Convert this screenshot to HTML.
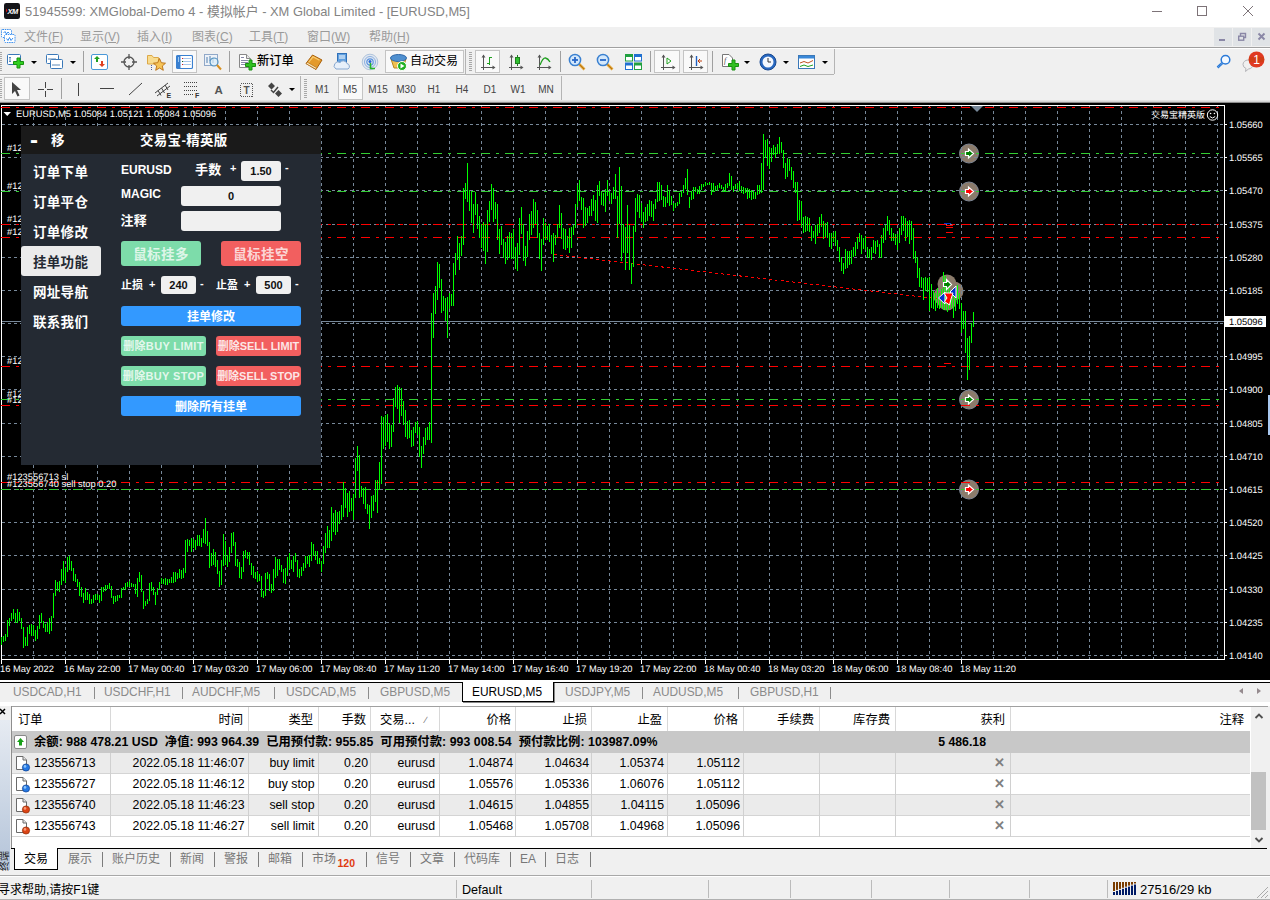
<!DOCTYPE html>
<html lang="zh"><head><meta charset="utf-8"><title>MT4</title><style>
*{box-sizing:border-box;margin:0;padding:0}
html,body{width:1270px;height:900px;overflow:hidden;background:#f0f0f0}
body{position:relative;font-family:"Liberation Sans","Noto Sans CJK SC",sans-serif;font-size:12px;color:#000}
.abs{position:absolute}
#title{left:0;top:0;width:1270px;height:27px;background:#fff}
#title .t{left:25px;top:3px;font-size:12.9px;line-height:18px;color:#838383;white-space:nowrap}
#menu{left:0;top:27px;width:1270px;height:20px;background:#f0f0f0}
#menu span{position:absolute;top:2px;line-height:16px;color:#9a9a9a;font-size:12px;white-space:nowrap}
.tb{left:0;width:1270px;height:27px;background:#f0f0f0}
.sep{position:absolute;width:1px;background:#a0a0a0}
.grip{position:absolute;width:3px;background-image:repeating-linear-gradient(#a8a8a8 0 1px,transparent 1px 2px)}
.pressed{position:absolute;border:1px solid #c4c4c4;background:#f9f9f9}
.ic{position:absolute}
.dd{position:absolute;width:0;height:0;border-left:3px solid transparent;border-right:3px solid transparent;border-top:3px solid #000}
.tf{position:absolute;top:84px;font-size:10px;color:#444;transform:translateX(-50%);white-space:nowrap}
#panel{left:21px;top:126px;width:300px;height:339px;background:#242a33;color:#fff;font-weight:bold;font-size:13.5px;letter-spacing:.3px}
#panel .hd{left:0;top:0;width:300px;height:28px;background:#1a1a1a}
#panel .m{position:absolute;left:12px;white-space:nowrap;line-height:16px}
#panel .sel{left:0;top:120px;width:80px;height:30px;background:#ebebeb;border-radius:3px}
#panel .in{position:absolute;background:#f0f0f0;border-radius:3px;color:#111;font-size:11px;letter-spacing:0;text-align:center;line-height:20px}
#panel .b{position:absolute;border-radius:3px;text-align:center;white-space:nowrap;overflow:hidden;letter-spacing:0}
#panel .l{position:absolute;white-space:nowrap;line-height:16px}
.g{background:#7ddcaa}.r{background:#f25f5f}.bl{background:#3399ff}
#ctabs{left:0;top:680px;width:1270px;height:26px;background:#f0f0f0;border-top:2px solid #fff}
#ctabs span{position:absolute;top:2px;line-height:16px;font-size:11.9px;color:#8a8a8a;white-space:nowrap}
#ctabs i{position:absolute;top:5px;width:1px;height:12px;background:#8c8c8c}
#term{left:0;top:706px;width:1270px;height:172px;background:#f0f0f0}
#tbl{left:11px;top:0;width:1240px;height:142px;background:#fff;border-top:1px solid #a0a0a0}
.row{position:absolute;left:0;width:1239px;height:21px;border-bottom:1px solid #d4d4d4}
.row span{position:absolute;top:2px;line-height:16px;white-space:nowrap;font-size:12.3px}
.hdr span{color:#000}
.vs{position:absolute;top:0;width:1px;background:#d8d8d8}
#status{left:0;top:875px;width:1270px;height:25px;background:#f0f0f0;border-top:1px solid #a8a8a8;border-bottom:1px solid #b0b0b0;box-shadow:inset 0 1px 0 #fff}
#status span{position:absolute;top:5.5px;line-height:16px;font-size:12px;white-space:nowrap}
#status i{position:absolute;top:4px;width:1px;height:18px;background:#bbb}
#ttabs span{position:absolute;top:3px;line-height:16px;font-size:12px;color:#777;white-space:nowrap}
#ttabs i{position:absolute;top:4px;width:1px;height:15px;background:#7c7c7c}
</style></head><body><div id="title" class="abs"><svg class="abs" style="left:4px;top:3px" width="16" height="16" viewBox="0 0 16 16"><rect x="0" y="0" width="16" height="16" rx="2.200" fill="#141418"/><text x="8.600" y="11" font-family="'Liberation Sans',sans-serif" font-size="7.500" font-weight="bold" font-style="italic" fill="#fff" text-anchor="middle" letter-spacing="-0.5">XM</text><path d="M2 5.500L3.500 7.500L2 9.500Z" fill="#e01010"/></svg><div class="abs t">51945599: XMGlobal-Demo 4 - 模拟帐户 - XM Global Limited - [EURUSD,M5]</div><svg class="abs" style="left:1140px;top:0" width="130" height="24" viewBox="0 0 130 24" fill="none" stroke="#7d7378" stroke-width="1" shape-rendering="crispEdges"><path d="M12 11.5H22"/><rect x="57.5" y="6.5" width="9" height="9"/><path d="M103 6L113 16M113 6L103 16" shape-rendering="auto"/></svg></div><div id="menu" class="abs"><svg class="ic" style="left:1px;top:2px" width="16" height="15" viewBox="0 0 16 15" ><rect x="0.500" y="0.500" width="10" height="8" rx="1" fill="#fff" stroke="#3a8ff0" stroke-dasharray="1.500 0.800"/><path d="M2.500 4L4 2.500L5.500 5L7 3L8.500 4.500" fill="none" stroke="#3a8ff0"/><rect x="3.500" y="5.500" width="10.500" height="8" rx="1" fill="#fff" stroke="#3a8ff0" stroke-dasharray="1.500 0.800"/><path d="M5.500 9.500L7 11.500L8.500 8.500L10 11.500L12 9" fill="none" stroke="#3a8ff0"/></svg><span style="left:24px">文件(<u>F</u>)</span><span style="left:80px">显示(<u>V</u>)</span><span style="left:137px">插入(<u>I</u>)</span><span style="left:192px">图表(<u>C</u>)</span><span style="left:249px">工具(<u>T</u>)</span><span style="left:307px">窗口(<u>W</u>)</span><span style="left:369px">帮助(<u>H</u>)</span><div class="abs" style="left:1214px;top:1px;width:18px;height:18px;background:#e0e3e6"></div><div class="abs" style="left:1233px;top:1px;width:18px;height:18px;background:#e0e3e6"></div><div class="abs" style="left:1252px;top:1px;width:18px;height:18px;background:#e0e3e6"></div><svg class="abs" style="left:1214px;top:1px" width="56" height="18" viewBox="0 0 56 18" stroke="#8a87a6" fill="none"><path d="M5 12H11" stroke-width="2"/><path d="M26.500 8V5.500H31.500V9.500H30" stroke-width="1.400"/><rect x="24.700" y="8.200" width="5" height="4" stroke-width="1.400"/><path d="M44.500 5.500L50.500 11.500M50.500 5.500L44.500 11.500" stroke-width="1.900"/></svg></div><div class="abs tb" style="top:47px;height:28px;border-top:1px solid #a0a0a0;box-shadow:inset 0 1px 0 #fff"></div><div class="abs tb" style="top:75px"></div><div class="abs" style="left:0;top:74px;width:466px;height:1px;background:#b4b4b4"></div><div class="abs" style="left:0;top:75px;width:466px;height:1px;background:#fafafa"></div><div class="grip" style="left:-1px;top:52px;height:20px"></div><div class="grip" style="left:-1px;top:79px;height:20px"></div><div class="grip" style="left:469px;top:52px;height:20px"></div><div class="grip" style="left:304px;top:79px;height:20px"></div><div class="sep" style="left:83px;top:51px;height:21px"></div><div class="sep" style="left:229px;top:51px;height:21px"></div><div class="sep" style="left:560px;top:51px;height:21px"></div><div class="sep" style="left:650px;top:51px;height:21px"></div><div class="sep" style="left:712px;top:51px;height:21px"></div><div class="sep" style="left:465px;top:49px;height:25px;background:#b4b4b4"></div><div class="sep" style="left:834px;top:49px;height:25px;background:#b4b4b4"></div><div class="sep" style="left:466px;top:74px;width:368px;height:1px;background:#b4b4b4"></div><div class="sep" style="left:61px;top:78px;height:21px"></div><div class="sep" style="left:300px;top:76px;height:26px;background:#b4b4b4"></div><div class="sep" style="left:561px;top:76px;height:26px;background:#b4b4b4"></div><div class="pressed" style="left:172px;top:50px;width:25px;height:23px"></div><div class="pressed" style="left:385px;top:50px;width:79px;height:23px"></div><div class="pressed" style="left:475px;top:50px;width:25px;height:23px"></div><div class="pressed" style="left:654px;top:50px;width:26px;height:23px"></div><div class="pressed" style="left:683px;top:50px;width:25px;height:23px"></div><div class="pressed" style="left:4px;top:77px;width:26px;height:23px"></div><div class="pressed" style="left:338px;top:77px;width:25px;height:23px"></div><div class="dd" style="left:31px;top:61px"></div><div class="dd" style="left:70px;top:61px"></div><div class="dd" style="left:744px;top:61px"></div><div class="dd" style="left:783px;top:61px"></div><div class="dd" style="left:822px;top:61px"></div><div class="dd" style="left:289px;top:88px"></div><svg class="ic" style="left:7px;top:53px" width="18" height="18" viewBox="0 0 18 18" ><rect x="0.5" y="1.5" width="13" height="10" rx="1" fill="#fff" stroke="#3a78b8"/><path d="M3 4V9M2 5L3 4L4 5M2 8L3 9L4 8" stroke="#5a88b8" fill="none"/><path d="M10 5H13V8.500H16.500V11.500H13V15H10V11.500H6.500V8.500H10Z" fill="#30d020" stroke="#189010"/></svg><svg class="ic" style="left:46px;top:53px" width="18" height="18" viewBox="0 0 18 18" ><rect x="0.5" y="1.5" width="12" height="9" rx="1" fill="#fff" stroke="#3a78b8"/><rect x="4.5" y="6.5" width="12" height="9" rx="1" fill="#fff" stroke="#3a78b8"/><path d="M2 6H10M6 12H14" stroke="#5a88b8"/></svg><svg class="ic" style="left:91px;top:53px" width="18" height="18" viewBox="0 0 18 18" ><rect x="0.5" y="1.5" width="16" height="15" rx="1.5" fill="#fff" stroke="#4a98d8"/><path d="M6 3L9 6H7V9H5V6H3Z" fill="#20a020"/><path d="M11 14L8 11H10V8H12V11H14Z" fill="#e04020"/></svg><svg class="ic" style="left:121px;top:54px" width="16" height="16" viewBox="0 0 16 16" ><circle cx="8" cy="8" r="5" fill="none" stroke="#555" stroke-width="1.3"/><path d="M8 0V5M8 11V16M0 8H5M11 8H16" stroke="#555" stroke-width="1.3"/></svg><svg class="ic" style="left:146px;top:53px" width="20" height="18" viewBox="0 0 20 18" ><path d="M1.500 2.500H6L7.500 4.500H12.500V11H1.500Z" fill="#f8dc90" stroke="#dca848"/><path d="M5.500 12V17" stroke="#5060a0" stroke-dasharray="1 1" shape-rendering="crispEdges"/><path d="M13.500 5.500L15.300 9.700L19.500 10.200L16.300 13L17.300 17.300L13.500 15L9.700 17.300L10.700 13L7.500 10.200L11.700 9.700Z" fill="#f6c458" stroke="#b86c10" stroke-width="0.9"/></svg><svg class="ic" style="left:176px;top:54px" width="17" height="16" viewBox="0 0 17 16" ><rect x="0.500" y="1.500" width="16" height="13" rx="1.200" fill="#fff" stroke="#3a80d0" stroke-width="1.200"/><rect x="1" y="2" width="3.500" height="12" fill="#3a80d0"/><rect x="2" y="3" width="1" height="5" fill="#9cc8f4"/><path d="M7 4.500H15M7 7.500H15M7 10.500H15" stroke="#a8c8ec" shape-rendering="crispEdges"/><path d="M5.500 4.500H6.500M5.500 10.500H6.500" stroke="#e02020" shape-rendering="crispEdges"/><path d="M5.500 7.500H6.500" stroke="#106010" shape-rendering="crispEdges"/></svg><svg class="ic" style="left:204px;top:53px" width="18" height="18" viewBox="0 0 18 18" ><rect x="0.5" y="1.5" width="13" height="11" fill="#eef2f8" stroke="#90a8c8"/><path d="M3 4V10M6 3V8M9 5V10" stroke="#5080b0"/><circle cx="10" cy="9" r="4" fill="#d8ecf8" fill-opacity=".7" stroke="#5090c0" stroke-width="1.2"/><path d="M13 12L17 16.5" stroke="#d89020" stroke-width="2"/></svg><svg class="ic" style="left:238px;top:53px" width="18" height="18" viewBox="0 0 18 18" ><path d="M1.500 1.500H8.500L12.500 5.500V14.500H1.500Z" fill="#fff" stroke="#888"/><path d="M8.500 1.500V5.500H12.500" fill="#e8e8e8" stroke="#888"/><path d="M3 4.500H6M3 7.500H10M3 9.500H10M3 11.500H7" stroke="#8888a8" shape-rendering="crispEdges"/><path d="M11 7H14V10.5H17.5V13.5H14V17H11V13.5H7.5V10.5H11Z" fill="#30c020" stroke="#189010"/></svg><svg class="ic" style="left:305px;top:54px" width="18" height="16" viewBox="0 0 18 16" ><path d="M1 9.500L7.500 1L17 6L11 15.500Z" fill="#e49a2c" stroke="#a8600c"/><path d="M3.500 8.500L8 2.800L14.500 6.200" fill="none" stroke="#f8cc70" stroke-width="1.200"/><path d="M1.200 9.700L11 15.300L11.800 13.800L2.500 8.300Z" fill="#fce8b8" stroke="#a8600c" stroke-width="0.600"/></svg><svg class="ic" style="left:333px;top:53px" width="18" height="18" viewBox="0 0 18 18" ><rect x="4.5" y="0.5" width="9" height="11" fill="#60a0e0" stroke="#3070b8"/><path d="M6 3H12M6 5H12" stroke="#fff"/><path d="M3 16H15A3 3 0 0 0 14 10.5A4 4 0 0 0 7 9.5A3.5 3.5 0 0 0 3 16Z" fill="#e8f0fa" stroke="#88a8d0"/></svg><svg class="ic" style="left:361px;top:53px" width="18" height="18" viewBox="0 0 18 18" ><circle cx="9" cy="9" r="7.800" fill="#e2e8f0" stroke="#b0c4dc"/><circle cx="9" cy="9" r="5.500" fill="none" stroke="#8cb0e0"/><circle cx="9" cy="9" r="3.200" fill="none" stroke="#5c94e0" stroke-width="1.200"/><circle cx="9" cy="8.500" r="1.500" fill="#2868d0"/><path d="M9.500 10V15.500H14" fill="none" stroke="#28b428" stroke-width="1.600"/></svg><svg class="ic" style="left:389px;top:53px" width="19" height="18" viewBox="0 0 19 18" ><path d="M2 6L5 15H14L17 6Z" fill="#f0c050" stroke="#b88820"/><ellipse cx="9.5" cy="5" rx="8" ry="3.5" fill="#5090d0" stroke="#3068a8"/><circle cx="13" cy="13" r="4.5" fill="#20b020" stroke="#fff"/><path d="M11.5 10.5L15.5 13L11.5 15.5Z" fill="#fff"/></svg><svg class="ic" style="left:479px;top:53px" width="18" height="18" viewBox="0 0 18 18" ><path d="M4.500 2V16.500M2 14.500H15" stroke="#555" fill="none" shape-rendering="crispEdges"/><path d="M2.500 4.500L4.500 1.500L6.500 4.500Z M13.500 12.500L16.500 14.500L13.500 16.500Z" fill="#555"/><path d="M10.500 4V12M8 10.500H10.500M10.500 4.500H13" stroke="#20a020" stroke-width="1.500" fill="none" shape-rendering="crispEdges"/></svg><svg class="ic" style="left:507px;top:53px" width="18" height="18" viewBox="0 0 18 18" ><path d="M4.500 2V16.500M2 14.500H15" stroke="#555" fill="none" shape-rendering="crispEdges"/><path d="M2.500 4.500L4.500 1.500L6.500 4.500Z M13.500 12.500L16.500 14.500L13.500 16.500Z" fill="#555"/><path d="M10.5 2V13" stroke="#208020"/><rect x="8.5" y="4.500" width="4" height="6" fill="#30c030" stroke="#208020"/></svg><svg class="ic" style="left:535px;top:53px" width="18" height="18" viewBox="0 0 18 18" ><path d="M4.500 2V16.500M2 14.500H15" stroke="#555" fill="none" shape-rendering="crispEdges"/><path d="M2.500 4.500L4.500 1.500L6.500 4.500Z M13.500 12.500L16.500 14.500L13.500 16.500Z" fill="#555"/><path d="M5 12Q8 4.500 10.500 5T15 9" stroke="#20a020" stroke-width="1.300" fill="none"/></svg><svg class="ic" style="left:568px;top:53px" width="18" height="18" viewBox="0 0 18 18" ><path d="M11 11L16.500 16.500" stroke="#e0a030" stroke-width="2.6"/><path d="M11.500 11.500L16 16" stroke="#a86810" stroke-width="0.8"/><circle cx="7" cy="7" r="5.600" fill="#d4e8fb" stroke="#3a80d0" stroke-width="1.500"/><path d="M4 7H10" stroke="#2868c8" stroke-width="1.8"/><path d="M7 4V10" stroke="#2868c8" stroke-width="1.8"/></svg><svg class="ic" style="left:596px;top:53px" width="18" height="18" viewBox="0 0 18 18" ><path d="M11 11L16.500 16.500" stroke="#e0a030" stroke-width="2.6"/><path d="M11.500 11.500L16 16" stroke="#a86810" stroke-width="0.8"/><circle cx="7" cy="7" r="5.600" fill="#d4e8fb" stroke="#3a80d0" stroke-width="1.500"/><path d="M4 7H10" stroke="#2868c8" stroke-width="1.8"/></svg><svg class="ic" style="left:625px;top:54px" width="17" height="16" viewBox="0 0 17 16" ><rect x="0" y="0" width="8" height="7.500" fill="#20a040"/><rect x="9" y="0" width="8" height="7.500" fill="#2070d0"/><rect x="0" y="8.5" width="8" height="7.500" fill="#2070d0"/><rect x="9" y="8.5" width="8" height="7.500" fill="#20a040"/><rect x="1" y="3" width="6" height="3.500" fill="#fff"/><rect x="10" y="3" width="6" height="3.500" fill="#fff"/><rect x="1" y="11.5" width="6" height="3.500" fill="#fff"/><rect x="10" y="11.5" width="6" height="3.500" fill="#fff"/></svg><svg class="ic" style="left:659px;top:53px" width="18" height="18" viewBox="0 0 18 18" ><path d="M4.500 2V16.500M2 14.500H15" stroke="#555" fill="none" shape-rendering="crispEdges"/><path d="M2.500 4.500L4.500 1.500L6.500 4.500Z M13.500 12.500L16.500 14.500L13.500 16.500Z" fill="#555"/><path d="M8 5L12 8L8 11Z" fill="#fff" stroke="#20a020"/></svg><svg class="ic" style="left:687px;top:53px" width="18" height="18" viewBox="0 0 18 18" ><path d="M4.500 2V16.500M2 14.500H15" stroke="#555" fill="none" shape-rendering="crispEdges"/><path d="M2.500 4.500L4.500 1.500L6.500 4.500Z M13.500 12.500L16.500 14.500L13.500 16.500Z" fill="#555"/><path d="M9.5 3V13" stroke="#2060c0" stroke-width="1.4"/><path d="M15 8H11M13 6L11 8L13 10" stroke="#c04010" fill="none"/></svg><svg class="ic" style="left:721px;top:53px" width="18" height="18" viewBox="0 0 18 18" ><path d="M1.5 1.5H8L11.5 5V13.5H1.5Z" fill="#fff" stroke="#777"/><text x="3" y="10" font-size="8" font-style="italic" fill="#555" font-family="Liberation Serif,serif">f</text><path d="M11 7H14V10.5H17.5V13.5H14V17H11V13.5H7.5V10.5H11Z" fill="#30c020" stroke="#189010"/></svg><svg class="ic" style="left:759px;top:53px" width="18" height="18" viewBox="0 0 18 18" ><circle cx="9" cy="9" r="8" fill="#2868c0" stroke="#184890"/><circle cx="9" cy="9" r="5.5" fill="#f4f8ff"/><path d="M9 5V9H12" stroke="#333" fill="none"/></svg><svg class="ic" style="left:798px;top:55px" width="18" height="15" viewBox="0 0 18 15" ><rect x="0.5" y="0.5" width="16" height="13" fill="#fff" stroke="#3a78b8"/><rect x="1" y="1" width="15" height="2.500" fill="#3a88d8"/><path d="M2 8L6 6.500L10 8L15 5.500" stroke="#c05020" fill="none"/><path d="M2 11.500L6 10L10 11.500L15 10" stroke="#20a020" fill="none"/></svg><svg class="ic" style="left:1215px;top:53px" width="18" height="18" viewBox="0 0 18 18" ><circle cx="10.500" cy="6.700" r="4.300" fill="#f4f9ff" stroke="#2a7ad8" stroke-width="1.500"/><path d="M7.300 10L2.500 14.500" stroke="#2a7ad8" stroke-width="2.400"/><path d="M7 10.300L3 14" stroke="#9cc4f0" stroke-width="0.700" stroke-dasharray="1 1"/></svg><svg class="ic" style="left:1240px;top:50px" width="28" height="24" viewBox="0 0 28 24" ><path d="M3 14.500A5 4.500 0 1 1 8.500 19L5.500 21.500L6 18.500A5 4.500 0 0 1 3 14.500Z" fill="#f0f0f0" stroke="#b4b4b8"/><circle cx="16.500" cy="9.500" r="8" fill="#e03a22"/><rect x="9" y="7" width="15" height="5" fill="#c84010" opacity=".6"/><text x="16.500" y="14" font-size="12" fill="#fff" text-anchor="middle" font-family="Liberation Sans,sans-serif">1</text></svg><svg class="ic" style="left:11px;top:81px" width="12" height="17" viewBox="0 0 12 17" ><path d="M1 1V13L4 10L6.500 15.500L8.500 14.500L6 9H10Z" fill="#444"/></svg><svg class="ic" style="left:38px;top:82px" width="15" height="15" viewBox="0 0 15 15" shape-rendering="crispEdges"><path d="M7.500 0V6M7.500 9V15M0 7.500H6M9 7.500H15" stroke="#444" fill="none" stroke-width="1"/></svg><svg class="ic" style="left:78px;top:83px" width="2" height="13" viewBox="0 0 2 13" shape-rendering="crispEdges"><path d="M0.500 0V13" stroke="#444" fill="none" stroke-width="1"/></svg><svg class="ic" style="left:100px;top:88px" width="14" height="2" viewBox="0 0 14 2" shape-rendering="crispEdges"><path d="M0 0.500H14" stroke="#444" fill="none" stroke-width="1"/></svg><svg class="ic" style="left:128px;top:82px" width="15" height="14" viewBox="0 0 15 14" ><path d="M1 13L14 1" stroke="#444" fill="none" stroke-width="1" /></svg><svg class="ic" style="left:154px;top:81px" width="19" height="17" viewBox="0 0 19 17" ><path d="M1 12L14 2M3 15L16 5M4 9.500L7 14.500M7.500 7L10.500 12M11 4L14 9" stroke="#444" fill="none"/><text x="12.500" y="17" font-size="7" font-weight="bold" fill="#333" font-family="Liberation Sans,sans-serif">E</text></svg><svg class="ic" style="left:183px;top:82px" width="17" height="16" viewBox="0 0 17 16" ><path d="M1 0.500H14M1 4.500H14M1 8.500H14M1 12.500H11" stroke="#444" stroke-dasharray="1 1" shape-rendering="crispEdges"/><text x="12" y="16" font-size="7" font-weight="bold" fill="#333" font-family="Liberation Sans,sans-serif">F</text></svg><div class="abs" style="left:214.500px;top:82px;font-size:11.500px;line-height:16px;font-weight:bold;color:#555">A</div><svg class="ic" style="left:239px;top:82px" width="15" height="15" viewBox="0 0 15 15" ><rect x="1.500" y="1.500" width="12" height="13" fill="none" stroke="#555" stroke-dasharray="1 1" shape-rendering="crispEdges"/><text x="7.500" y="12" font-size="10" font-weight="bold" fill="#555" text-anchor="middle" font-family="Liberation Sans,sans-serif">T</text></svg><svg class="ic" style="left:267px;top:82px" width="16" height="15" viewBox="0 0 16 15" ><path d="M4.500 0.500L8 4L4.500 7.500L1 4Z M11.500 8L15 11.500L11.500 15L8 11.500Z" fill="#444"/><path d="M4 8L6.500 10.500L11 5" fill="none" stroke="#444" stroke-width="1.500"/></svg><div class="abs" style="left:257px;top:53px;font-size:12.3px;font-weight:500;line-height:16px;white-space:nowrap">新订单</div><div class="abs" style="left:410px;top:53px;font-size:12px;line-height:16px;white-space:nowrap">自动交易</div><div class="tf" style="left:322px">M1</div><div class="tf" style="left:350px">M5</div><div class="tf" style="left:378px">M15</div><div class="tf" style="left:406px">M30</div><div class="tf" style="left:434px">H1</div><div class="tf" style="left:462px">H4</div><div class="tf" style="left:490px">D1</div><div class="tf" style="left:518px">W1</div><div class="tf" style="left:546px">MN</div><div class="abs" style="left:0;top:100px;width:1270px;height:3px;background:linear-gradient(#f0f0f0,#d4d4d4 34%,#d4d4d4 66%,#8c8c8c 67%)"></div><svg id="chart" width="1270" height="578" viewBox="0 103 1270 578" shape-rendering="crispEdges" style="position:absolute;left:0;top:103px">
<rect x="0" y="103" width="1270" height="578" fill="#000"/>
<g shape-rendering="auto"><circle cx="969" cy="153.5" r="9.5" fill="#8b7b6b" stroke="#7d8593" stroke-width="1"/><circle cx="969" cy="191.5" r="9.5" fill="#8b7b6b" stroke="#7d8593" stroke-width="1"/><circle cx="969" cy="399.5" r="9.5" fill="#8b7b6b" stroke="#7d8593" stroke-width="1"/><circle cx="969" cy="489.5" r="9.5" fill="#8b7b6b" stroke="#7d8593" stroke-width="1"/><circle cx="947" cy="284" r="9.5" fill="#8b7b6b"/><circle cx="954" cy="291" r="9.5" fill="#8b7b6b"/><circle cx="947" cy="301" r="9.5" fill="#8b7b6b"/><circle cx="943" cy="296" r="9.5" fill="#8b7b6b"/></g>
<path d="M33.5 105V659 M65.5 105V659 M97.5 105V659 M129.5 105V659 M161.5 105V659 M193.5 105V659 M225.5 105V659 M257.5 105V659 M289.5 105V659 M321.5 105V659 M353.5 105V659 M385.5 105V659 M417.5 105V659 M449.5 105V659 M481.5 105V659 M513.5 105V659 M545.5 105V659 M577.5 105V659 M609.5 105V659 M641.5 105V659 M673.5 105V659 M705.5 105V659 M737.5 105V659 M769.5 105V659 M801.5 105V659 M833.5 105V659 M865.5 105V659 M897.5 105V659 M929.5 105V659 M961.5 105V659 M993.5 105V659 M1025.5 105V659 M1057.5 105V659 M1089.5 105V659 M1121.5 105V659 M1153.5 105V659 M1185.5 105V659 M1217.5 105V659 M2 124.5H1224 M2 157.5H1224 M2 190.5H1224 M2 224.5H1224 M2 257.5H1224 M2 290.5H1224 M2 323.5H1224 M2 356.5H1224 M2 389.5H1224 M2 423.5H1224 M2 456.5H1224 M2 489.5H1224 M2 522.5H1224 M2 555.5H1224 M2 589.5H1224 M2 622.5H1224 M2 655.5H1224" stroke="#778899" stroke-width="1" stroke-dasharray="3 3" fill="none"/>
<path d="M1.5 105V660 M1 105.5H1225 M1224.5 105V660 M1 659.5H1225" stroke="#fff" stroke-width="1" fill="none"/>
<path d="M1224 124.5H1227 M1224 157.5H1227 M1224 190.5H1227 M1224 224.5H1227 M1224 257.5H1227 M1224 290.5H1227 M1224 323.5H1227 M1224 356.5H1227 M1224 389.5H1227 M1224 423.5H1227 M1224 456.5H1227 M1224 489.5H1227 M1224 522.5H1227 M1224 555.5H1227 M1224 589.5H1227 M1224 622.5H1227 M1224 655.5H1227 M1.5 659V664 M65.5 659V664 M129.5 659V664 M193.5 659V664 M257.5 659V664 M321.5 659V664 M385.5 659V664 M449.5 659V664 M513.5 659V664 M577.5 659V664 M641.5 659V664 M705.5 659V664 M769.5 659V664 M833.5 659V664 M897.5 659V664 M961.5 659V664" stroke="#fff" stroke-width="1" fill="none"/>
<path d="M1 107.5H1223" stroke="#ff0000" stroke-width="1" stroke-dasharray="9 6 3 6" fill="none"/>
<path d="M1 224.5H1223" stroke="#ff0000" stroke-width="1" stroke-dasharray="9 6 3 6" fill="none"/>
<path d="M1 237.5H1223" stroke="#ff0000" stroke-width="1" stroke-dasharray="9 6 3 6" fill="none"/>
<path d="M1 366.5H1223" stroke="#ff0000" stroke-width="1" stroke-dasharray="9 6 3 6" fill="none"/>
<path d="M1 405.5H1223" stroke="#ff0000" stroke-width="1" stroke-dasharray="9 6 3 6" fill="none"/>
<path d="M1 482.5H1223" stroke="#ff0000" stroke-width="1" stroke-dasharray="9 6 3 6" fill="none"/>
<path d="M1 153.5H1223" stroke="#32cd32" stroke-width="1" stroke-dasharray="9 6 3 6" fill="none"/>
<path d="M1 191.5H1223" stroke="#32cd32" stroke-width="1" stroke-dasharray="9 6 3 6" fill="none"/>
<path d="M1 399.5H1223" stroke="#32cd32" stroke-width="1" stroke-dasharray="9 6 3 6" fill="none"/>
<path d="M1 489.5H1223" stroke="#32cd32" stroke-width="1" stroke-dasharray="9 6 3 6" fill="none"/>
<path d="M2 321.5H1224" stroke="#778899" stroke-width="1" fill="none"/>
<path d="M554 254.5L940 299" stroke="#ff0000" stroke-width="1" stroke-dasharray="3 3" fill="none" shape-rendering="crispEdges"/>
<path d="M1.5 637V645M3.5 636V642M5.5 634V641M7.5 620V637M9.5 618V626M11.5 613V621M13.5 609V619M15.5 613V623M17.5 609V623M19.5 612V621M21.5 618V629M23.5 627V648M25.5 637V646M27.5 627V646M29.5 625V634M31.5 624V636M33.5 625V636M35.5 630V641M37.5 626V639M39.5 615V629M41.5 613V623M43.5 621V628M45.5 624V632M47.5 622V632M49.5 618V634M51.5 616V631M53.5 593V618M55.5 580V596M57.5 582V591M59.5 581V592M61.5 569V585M63.5 561V581M65.5 568V583M67.5 557V572M69.5 556V570M71.5 561V571M73.5 568V581M75.5 574V582M77.5 579V587M79.5 582V596M81.5 587V597M83.5 593V603M85.5 588V600M87.5 592V600M89.5 594V604M91.5 599V604M93.5 595V603M95.5 594V600M97.5 594V600M99.5 595V603M101.5 587V601M103.5 587V592M105.5 585V591M107.5 585V589M109.5 583V589M111.5 586V598M113.5 596V604M115.5 596V602M117.5 595V601M119.5 595V598M121.5 588V598M123.5 587V590M125.5 583V590M127.5 582V587M129.5 581V587M131.5 583V587M133.5 584V587M135.5 584V594M137.5 578V597M139.5 572V582M141.5 575V592M143.5 591V609M145.5 601V606M147.5 599V604M149.5 583V601M151.5 582V591M153.5 587V595M155.5 592V605M157.5 588V595M159.5 582V589M161.5 578V584M163.5 579V584M165.5 578V585M167.5 579V585M169.5 579V583M171.5 577V583M173.5 572V583M175.5 572V582M177.5 573V579M179.5 569V578M181.5 570V579M183.5 568V578M185.5 540V573M187.5 539V552M189.5 540V546M191.5 538V552M193.5 539V548M195.5 540V550M197.5 535V546M199.5 535V546M201.5 538V547M203.5 529V543M205.5 518V544M207.5 531V546M209.5 542V568M211.5 553V566M213.5 549V565M215.5 552V567M217.5 560V574M219.5 571V587M221.5 560V585M223.5 534V566M225.5 541V565M227.5 555V567M229.5 547V562M231.5 533V553M233.5 532V546M235.5 542V566M237.5 559V567M239.5 562V578M241.5 567V579M243.5 551V572M245.5 550V558M247.5 552V559M249.5 552V565M251.5 563V575M253.5 566V578M255.5 572V579M257.5 571V582M259.5 574V581M261.5 576V597M263.5 591V598M265.5 573V596M267.5 572V579M269.5 574V591M271.5 584V593M273.5 569V591M275.5 557V578M277.5 559V576M279.5 559V570M281.5 565V572M283.5 569V583M285.5 568V584M287.5 557V576M289.5 553V569M291.5 560V569M293.5 556V572M295.5 553V562M297.5 560V577M299.5 569V578M301.5 567V576M303.5 563V571M305.5 556V568M307.5 556V564M309.5 555V567M311.5 542V561M313.5 544V556M315.5 551V560M317.5 551V564M319.5 558V564M321.5 561V572M323.5 546V564M325.5 533V553M327.5 526V548M329.5 530V548M331.5 507V541M333.5 513V532M335.5 510V535M337.5 512V532M339.5 511V524M341.5 505V520M343.5 482V517M345.5 488V508M347.5 493V517M349.5 491V512M351.5 498V511M353.5 494V520M355.5 458V498M357.5 446V471M359.5 455V498M361.5 486V497M363.5 488V504M365.5 487V509M367.5 504V514M369.5 505V529M371.5 496V518M373.5 495V511M375.5 480V502M377.5 480V513M379.5 462V490M381.5 416V484M383.5 417V449M385.5 415V446M387.5 414V442M389.5 423V449M391.5 425V447M393.5 398V432M395.5 387V407M397.5 385V409M399.5 387V423M401.5 388V416M403.5 401V425M405.5 410V437M407.5 421V439M409.5 420V438M411.5 430V447M413.5 427V446M415.5 422V433M417.5 421V435M419.5 427V457M421.5 446V468M423.5 437V454M425.5 428V445M427.5 427V440M429.5 422V440M431.5 313V443M433.5 293V338M435.5 286V314M437.5 262V300M439.5 264V288M441.5 279V313M443.5 296V311M445.5 298V321M447.5 297V338M449.5 293V309M451.5 294V306M453.5 263V306M455.5 253V275M457.5 236V260M459.5 243V270M461.5 236V256M463.5 188V245M465.5 183V199M467.5 163V202M469.5 190V211M471.5 191V223M473.5 204V233M475.5 192V215M477.5 204V229M479.5 216V238M481.5 224V248M483.5 222V251M485.5 224V264M487.5 210V252M489.5 201V222M491.5 184V210M493.5 188V222M495.5 202V219M497.5 204V240M499.5 229V254M501.5 226V245M503.5 239V258M505.5 242V264M507.5 236V260M509.5 232V258M511.5 233V259M513.5 229V259M515.5 247V269M517.5 243V271M519.5 218V255M521.5 207V234M523.5 224V261M525.5 246V266M527.5 231V257M529.5 214V240M531.5 211V235M533.5 199V228M535.5 202V224M537.5 210V238M539.5 233V259M541.5 239V271M543.5 218V245M545.5 223V240M547.5 226V240M549.5 224V242M551.5 235V254M553.5 233V262M555.5 235V245M557.5 224V238M559.5 205V228M561.5 213V239M563.5 228V249M565.5 229V250M567.5 236V248M569.5 228V253M571.5 227V248M573.5 225V235M575.5 204V228M577.5 185V207M579.5 180V201M581.5 197V210M583.5 198V228M585.5 207V226M587.5 208V223M589.5 206V216M591.5 199V216M593.5 195V211M595.5 200V221M597.5 185V223M599.5 181V196M601.5 192V205M603.5 193V206M605.5 189V212M607.5 180V196M609.5 191V201M611.5 193V204M613.5 187V199M615.5 174V199M617.5 196V238M619.5 167V224M621.5 186V261M623.5 224V253M625.5 227V270M627.5 205V253M629.5 225V270M631.5 263V284M633.5 226V267M635.5 198V232M637.5 194V212M639.5 195V218M641.5 203V222M643.5 212V228M645.5 207V222M647.5 204V221M649.5 200V216M651.5 201V217M653.5 204V221M655.5 199V209M657.5 182V202M659.5 182V201M661.5 185V200M663.5 196V207M665.5 197V207M667.5 185V203M669.5 190V206M671.5 196V205M673.5 203V211M675.5 203V208M677.5 202V206M679.5 193V204M681.5 191V197M683.5 185V193M685.5 178V189M687.5 169V195M689.5 197V208M691.5 191V200M693.5 187V199M695.5 187V192M697.5 189V194M699.5 186V194M701.5 184V190M703.5 184V187M705.5 182V186M707.5 183V185M709.5 182V185M711.5 183V195M713.5 183V192M715.5 186V191M717.5 185V191M719.5 183V188M721.5 185V189M723.5 187V192M725.5 184V192M727.5 183V188M729.5 173V186M731.5 176V190M733.5 186V192M735.5 184V189M737.5 183V189M739.5 181V191M741.5 186V193M743.5 187V194M745.5 188V193M747.5 188V199M749.5 189V198M751.5 190V200M753.5 191V199M755.5 192V199M757.5 185V195M759.5 185V194M761.5 163V193M763.5 134V190M765.5 140V158M767.5 139V166M769.5 147V169M771.5 148V162M773.5 145V155M775.5 147V158M777.5 144V154M779.5 137V154M781.5 142V153M783.5 150V168M785.5 163V179M787.5 158V177M789.5 159V171M791.5 167V180M793.5 171V188M795.5 182V193M797.5 182V221M799.5 200V220M801.5 201V227M803.5 217V233M805.5 216V232M807.5 217V231M809.5 218V232M811.5 226V241M813.5 231V238M815.5 225V244M817.5 224V236M819.5 217V233M821.5 214V227M823.5 221V239M825.5 223V237M827.5 222V238M829.5 233V247M831.5 233V249M833.5 232V242M835.5 231V246M837.5 240V251M839.5 247V262M841.5 257V271M843.5 263V274M845.5 249V269M847.5 251V268M849.5 251V265M851.5 250V264M853.5 247V257M855.5 242V256M857.5 237V249M859.5 233V242M861.5 235V254M863.5 238V249M865.5 236V250M867.5 247V258M869.5 249V258M871.5 247V260M873.5 240V253M875.5 241V254M877.5 240V247M879.5 244V258M881.5 235V258M883.5 228V243M885.5 225V240M887.5 216V231M889.5 220V235M891.5 228V241M893.5 233V241M895.5 234V245M897.5 234V250M899.5 228V243M901.5 216V235M903.5 216V231M905.5 218V241M907.5 221V237M909.5 220V244M911.5 221V240M913.5 228V259M915.5 251V263M917.5 257V278M919.5 268V287M921.5 277V288M923.5 278V300M925.5 277V291M927.5 278V292M929.5 277V311M931.5 284V308M933.5 291V309M935.5 293V311M937.5 288V308M939.5 293V309M941.5 289V308M943.5 272V310M945.5 276V310M947.5 289V312M949.5 288V309M951.5 291V308M953.5 292V318M955.5 290V311M957.5 285V304M959.5 293V309M961.5 303V333M963.5 311V329M965.5 311V353M967.5 338V380M969.5 336V370M971.5 323V343M973.5 312V327" stroke="#00ff00" stroke-width="1" fill="none"/>
<path d="M944 363.5H951 M946 225.5H953 M946 227.5H953 M946 232.5H953" stroke="#ff0000"/><path d="M944 223.5H951" stroke="#0033cc"/>
<g shape-rendering="auto"><path d="M965.5 151.5H968.5V149.0L973.5 153.5L968.5 158.0V155.5H965.5Z" fill="#008000" stroke="#fff" stroke-width="1.2"/><path d="M965.5 189.5H968.5V187.0L973.5 191.5L968.5 196.0V193.5H965.5Z" fill="#ff0000" stroke="#fff" stroke-width="1.2"/><path d="M965.5 397.5H968.5V395.0L973.5 399.5L968.5 404.0V401.5H965.5Z" fill="#008000" stroke="#fff" stroke-width="1.2"/><path d="M965.5 487.5H968.5V485.0L973.5 489.5L968.5 494.0V491.5H965.5Z" fill="#ff0000" stroke="#fff" stroke-width="1.2"/><path d="M943.5 282.5H946.5V279.5L951.5 284.5L946.5 289.5V286.5H943.5Z" fill="#008000" stroke="#fff" stroke-width="1.2"/><path d="M938.5 298L945 292V304Z M956 286V298L950 292Z" fill="#0033cc" stroke="#fff" stroke-width="1"/><path d="M944 293H953L951 299L949.5 305L944.5 301.5L947 298Z" fill="#ff0000" stroke="#fff" stroke-width="1"/></g>
<g font-family="'Liberation Sans','Noto Sans CJK SC',sans-serif" font-size="9.33" fill="#fff" shape-rendering="auto" text-rendering="geometricPrecision">
<path d="M3.500 112H11L7.250 116Z" fill="#fff"/>
<text x="16" y="117">EURUSD,M5  1.05084 1.05121 1.05084 1.05096</text>
<text x="1229" y="128">1.05660</text>
<text x="1229" y="161">1.05565</text>
<text x="1229" y="194">1.05470</text>
<text x="1229" y="228">1.05375</text>
<text x="1229" y="261">1.05280</text>
<text x="1229" y="294">1.05185</text>
<text x="1229" y="360">1.04995</text>
<text x="1229" y="393">1.04900</text>
<text x="1229" y="427">1.04805</text>
<text x="1229" y="460">1.04710</text>
<text x="1229" y="493">1.04615</text>
<text x="1229" y="526">1.04520</text>
<text x="1229" y="559">1.04425</text>
<text x="1229" y="593">1.04330</text>
<text x="1229" y="626">1.04235</text>
<text x="1229" y="659">1.04140</text>
<rect x="1225" y="316" width="41" height="11" fill="#fff"/><text x="1229" y="325" fill="#000">1.05096</text>
<text x="0" y="672">16 May 2022</text>
<text x="64" y="672">16 May 22:00</text>
<text x="128" y="672">17 May 00:40</text>
<text x="192" y="672">17 May 03:20</text>
<text x="256" y="672">17 May 06:00</text>
<text x="320" y="672">17 May 08:40</text>
<text x="384" y="672">17 May 11:20</text>
<text x="448" y="672">17 May 14:00</text>
<text x="512" y="672">17 May 16:40</text>
<text x="576" y="672">17 May 19:20</text>
<text x="640" y="672">17 May 22:00</text>
<text x="704" y="672">18 May 00:40</text>
<text x="768" y="672">18 May 03:20</text>
<text x="832" y="672">18 May 06:00</text>
<text x="896" y="672">18 May 08:40</text>
<text x="960" y="672">18 May 11:20</text>
<text x="7" y="151">#123556727 buy stop 0.20</text>
<text x="7" y="189">#123556743 sell limit 0.20</text>
<text x="7" y="222">#123556713 tp</text>
<text x="7" y="235">#123556727 sl</text>
<text x="7" y="364">#123556743 tp</text>
<text x="7" y="397">#123556713 buy limit 0.20</text>
<text x="7" y="403">#123556740 sl</text>
<text x="7" y="480">#123556713 sl</text>
<text x="7" y="487">#123556740 sell stop 0.20</text>
<text x="1151" y="118" font-size="9">交易宝精英版</text>
<g stroke="#fff" fill="none" stroke-width="1"><circle cx="1212.5" cy="115" r="5.2"/><path d="M1209.8 116.5Q1212.5 119.5 1215.2 116.5"/></g><circle cx="1210.6" cy="113.5" r="0.8"/><circle cx="1214.4" cy="113.5" r="0.8"/>
</g>
<path d="M971 106H983L977 112Z" fill="#778899" shape-rendering="auto"/>
</svg><div id="panel" class="abs"><div class="abs hd"></div><div class="l" style="left:9px;top:5.500px;font-size:24px;letter-spacing:0">-</div><div class="l" style="left:30px;top:7px">移</div><div class="l" style="left:119px;top:7px">交易宝-精英版</div><div class="abs sel"></div><div class="m" style="top:39px">订单下单</div><div class="m" style="top:69px">订单平仓</div><div class="m" style="top:99px">订单修改</div><div class="m" style="top:129px;color:#242a33">挂单功能</div><div class="m" style="top:159px">网址导航</div><div class="m" style="top:189px">联系我们</div><div class="l" style="left:100px;top:35.5px;font-size:12px;letter-spacing:0">EURUSD</div><div class="l" style="left:174px;top:36px;font-size:13px">手数</div><div class="l" style="left:209px;top:34px;font-size:11px">+</div><div class="l" style="left:264px;top:33px;font-size:11px">-</div><div class="in" style="left:220px;top:35px;width:40px;height:20px">1.50</div><div class="l" style="left:100px;top:60px;font-size:12px;letter-spacing:0">MAGIC</div><div class="in" style="left:160px;top:60px;width:100px;height:20px">0</div><div class="l" style="left:99.500px;top:87px;font-size:13px">注释</div><div class="in" style="left:160px;top:85px;width:100px;height:20px"></div><div class="b g" style="left:100px;top:115px;width:80px;height:25px;line-height:28px;letter-spacing:.4px;color:rgba(255,255,255,.75)">鼠标挂多</div><div class="b r" style="left:200px;top:115px;width:80px;height:25px;line-height:28px;letter-spacing:.4px;color:rgba(255,255,255,.75)">鼠标挂空</div><div class="l" style="left:100px;top:151px;font-size:11px;letter-spacing:0">止损</div><div class="l" style="left:128px;top:150px;font-size:11px">+</div><div class="in" style="left:140px;top:150px;width:35px;height:18px;line-height:19px">240</div><div class="l" style="left:179px;top:149px;font-size:11px">-</div><div class="l" style="left:195px;top:151px;font-size:11px;letter-spacing:0">止盈</div><div class="l" style="left:223px;top:150px;font-size:11px">+</div><div class="in" style="left:235px;top:150px;width:35px;height:18px;line-height:19px">500</div><div class="l" style="left:274px;top:149px;font-size:11px">-</div><div class="b bl" style="left:100px;top:180px;width:180px;height:20px;line-height:23px;font-size:12px">挂单修改</div><div class="b g" style="left:100px;top:210px;width:85px;height:20px;line-height:21px;font-size:11px;letter-spacing:.35px;color:rgba(255,255,255,.8)">删除BUY LIMIT</div><div class="b r" style="left:195px;top:210px;width:85px;height:20px;line-height:21px;font-size:11px;color:rgba(255,255,255,.85)">删除SELL LIMIT</div><div class="b g" style="left:100px;top:240px;width:85px;height:20px;line-height:21px;font-size:11px;letter-spacing:.35px;color:rgba(255,255,255,.8)">删除BUY STOP</div><div class="b r" style="left:195px;top:240px;width:85px;height:20px;line-height:21px;font-size:11px;color:rgba(255,255,255,.85)">删除SELL STOP</div><div class="b bl" style="left:100px;top:270px;width:180px;height:20px;line-height:23px;font-size:12px">删除所有挂单</div></div><div id="ctabs" class="abs"><span style="left:13px">USDCAD,H1</span><span style="left:104px">USDCHF,H1</span><span style="left:192px">AUDCHF,M5</span><span style="left:286px">USDCAD,M5</span><span style="left:380px">GBPUSD,M5</span><span style="left:565px">USDJPY,M5</span><span style="left:653px">AUDUSD,M5</span><span style="left:750px">GBPUSD,H1</span><i style="left:94px"></i><i style="left:182px"></i><i style="left:274px"></i><i style="left:368px"></i><i style="left:642px"></i><i style="left:738px"></i><i style="left:830px"></i><div class="abs" style="left:0;top:0;width:1270px;height:1px;background:#000"></div><div class="abs" style="left:0;top:20px;width:1270px;height:4px;background:#fff"></div><div class="abs" style="left:462px;top:0px;width:92px;height:19.500px;background:#fff;border:1px solid #000;border-top:none;box-shadow:1px 1px 0 #888"></div><span style="left:472px;color:#000">EURUSD,M5</span><div class="abs" style="left:1239px;top:6px;border:3px solid transparent;border-right:4px solid #958a8e;border-left:none"></div><div class="abs" style="left:1257px;top:6px;border:3px solid transparent;border-left:4px solid #958a8e;border-right:none"></div></div><div id="term" class="abs"><div class="abs" style="left:0;top:14px;width:10px;height:150px;background:linear-gradient(#e6ebf2,#b4c4d9)"></div><svg class="abs" style="left:0px;top:2px" width="7" height="7" viewBox="0 0 7 7" stroke="#000" stroke-width="1.5"><path d="M0 1L5 6M5 1L0 6"/></svg><div id="tbl" class="abs"><div class="row hdr" style="top:0;height:24px;border-bottom:none"><span style="left:7px;top:4.5px">订单</span><span style="right:1007px;top:4.5px">时间</span><span style="right:937px;top:4.5px">类型</span><span style="right:884px;top:4.5px">手数</span><span style="left:369px;top:4.5px">交易...</span><span style="right:739px;top:4.5px">价格</span><span style="right:663px;top:4.5px">止损</span><span style="right:588px;top:4.5px">止盈</span><span style="right:512px;top:4.5px">价格</span><span style="right:436px;top:4.5px">手续费</span><span style="right:360px;top:4.5px">库存费</span><span style="right:245px;top:4.5px">获利</span><span style="right:6px;top:4.5px">注释</span><span style="left:414px;top:5px;font-size:9px;color:#666">&#x2215;</span></div><div class="vs" style="left:99px;height:24px"></div><div class="vs" style="left:237px;height:24px"></div><div class="vs" style="left:307px;height:24px"></div><div class="vs" style="left:359px;height:24px"></div><div class="vs" style="left:428px;height:24px"></div><div class="vs" style="left:504px;height:24px"></div><div class="vs" style="left:580px;height:24px"></div><div class="vs" style="left:656px;height:24px"></div><div class="vs" style="left:732px;height:24px"></div><div class="vs" style="left:808px;height:24px"></div><div class="vs" style="left:884px;height:24px"></div><div class="vs" style="left:999px;height:24px"></div><div class="row" style="top:24px;height:22px;background:#c8c8c8;font-weight:bold;border-bottom:none"><span style="left:23px;top:3px;letter-spacing:0.05px">余额: 988 478.21 USD&nbsp; 净值: 993 964.39&nbsp; 已用预付款: 955.85&nbsp; 可用预付款: 993 008.54&nbsp; 预付款比例: 103987.09%</span><span style="right:264px;top:3px">5 486.18</span><svg class="abs" style="left:3px;top:4px" width="13" height="14" viewBox="0 0 13 14"><rect x="0.5" y="0.5" width="12" height="13" rx="1.5" fill="#fff" stroke="#888"/><path d="M6.5 3L10 7H8V10.5H5V7H3Z" fill="#18a018"/></svg></div><div class="row" style="top:46px;background:#ebebeb"><span style="left:23px">123556713</span><span style="right:1005.5px">2022.05.18 11:46:07</span><span style="right:935.5px">buy limit</span><span style="right:882px">0.20</span><span style="right:815px">eurusd</span><span style="right:737px">1.04874</span><span style="right:661px">1.04634</span><span style="right:586px">1.05374</span><span style="right:510px">1.05112</span><span style="right:245px;color:#808080;font-size:13px;font-weight:bold;top:2px">&#x2715;</span><svg class="abs" style="left:4px;top:2px" width="16" height="17" viewBox="0 0 16 17"><path d="M1.500 1.500H8L11.500 5V14.500H1.500Z" fill="#fff" stroke="#6a6a6a"/><path d="M8 1.500V5H11.500" fill="#e4e4e4" stroke="#6a6a6a"/><circle cx="11" cy="12.500" r="3.600" fill="#2478e4" stroke="#0c3c8c" stroke-width="0.700"/><circle cx="10" cy="11.400" r="1.300" fill="#9ad0ff" opacity="0.850"/></svg><div class="vs" style="left:99px;height:21px;background:#d0d0d0"></div><div class="vs" style="left:237px;height:21px;background:#d0d0d0"></div><div class="vs" style="left:307px;height:21px;background:#d0d0d0"></div><div class="vs" style="left:359px;height:21px;background:#d0d0d0"></div><div class="vs" style="left:428px;height:21px;background:#d0d0d0"></div><div class="vs" style="left:504px;height:21px;background:#d0d0d0"></div><div class="vs" style="left:580px;height:21px;background:#d0d0d0"></div><div class="vs" style="left:656px;height:21px;background:#d0d0d0"></div><div class="vs" style="left:732px;height:21px;background:#d0d0d0"></div><div class="vs" style="left:808px;height:21px;background:#d0d0d0"></div><div class="vs" style="left:884px;height:21px;background:#d0d0d0"></div><div class="vs" style="left:999px;height:21px;background:#d0d0d0"></div></div><div class="row" style="top:67px;background:#fff"><span style="left:23px">123556727</span><span style="right:1005.5px">2022.05.18 11:46:12</span><span style="right:935.5px">buy stop</span><span style="right:882px">0.20</span><span style="right:815px">eurusd</span><span style="right:737px">1.05576</span><span style="right:661px">1.05336</span><span style="right:586px">1.06076</span><span style="right:510px">1.05112</span><span style="right:245px;color:#808080;font-size:13px;font-weight:bold;top:2px">&#x2715;</span><svg class="abs" style="left:4px;top:2px" width="16" height="17" viewBox="0 0 16 17"><path d="M1.500 1.500H8L11.500 5V14.500H1.500Z" fill="#fff" stroke="#6a6a6a"/><path d="M8 1.500V5H11.500" fill="#e4e4e4" stroke="#6a6a6a"/><circle cx="11" cy="12.500" r="3.600" fill="#2478e4" stroke="#0c3c8c" stroke-width="0.700"/><circle cx="10" cy="11.400" r="1.300" fill="#9ad0ff" opacity="0.850"/></svg><div class="vs" style="left:99px;height:21px;background:#d0d0d0"></div><div class="vs" style="left:237px;height:21px;background:#d0d0d0"></div><div class="vs" style="left:307px;height:21px;background:#d0d0d0"></div><div class="vs" style="left:359px;height:21px;background:#d0d0d0"></div><div class="vs" style="left:428px;height:21px;background:#d0d0d0"></div><div class="vs" style="left:504px;height:21px;background:#d0d0d0"></div><div class="vs" style="left:580px;height:21px;background:#d0d0d0"></div><div class="vs" style="left:656px;height:21px;background:#d0d0d0"></div><div class="vs" style="left:732px;height:21px;background:#d0d0d0"></div><div class="vs" style="left:808px;height:21px;background:#d0d0d0"></div><div class="vs" style="left:884px;height:21px;background:#d0d0d0"></div><div class="vs" style="left:999px;height:21px;background:#d0d0d0"></div></div><div class="row" style="top:88px;background:#ebebeb"><span style="left:23px">123556740</span><span style="right:1005.5px">2022.05.18 11:46:23</span><span style="right:935.5px">sell stop</span><span style="right:882px">0.20</span><span style="right:815px">eurusd</span><span style="right:737px">1.04615</span><span style="right:661px">1.04855</span><span style="right:586px">1.04115</span><span style="right:510px">1.05096</span><span style="right:245px;color:#808080;font-size:13px;font-weight:bold;top:2px">&#x2715;</span><svg class="abs" style="left:4px;top:2px" width="16" height="17" viewBox="0 0 16 17"><path d="M1.500 1.500H8L11.500 5V14.500H1.500Z" fill="#fff" stroke="#6a6a6a"/><path d="M8 1.500V5H11.500" fill="#e4e4e4" stroke="#6a6a6a"/><circle cx="11" cy="12.500" r="3.600" fill="#dc4416" stroke="#8a2800" stroke-width="0.700"/><circle cx="10" cy="11.400" r="1.300" fill="#ffa888" opacity="0.850"/></svg><div class="vs" style="left:99px;height:21px;background:#d0d0d0"></div><div class="vs" style="left:237px;height:21px;background:#d0d0d0"></div><div class="vs" style="left:307px;height:21px;background:#d0d0d0"></div><div class="vs" style="left:359px;height:21px;background:#d0d0d0"></div><div class="vs" style="left:428px;height:21px;background:#d0d0d0"></div><div class="vs" style="left:504px;height:21px;background:#d0d0d0"></div><div class="vs" style="left:580px;height:21px;background:#d0d0d0"></div><div class="vs" style="left:656px;height:21px;background:#d0d0d0"></div><div class="vs" style="left:732px;height:21px;background:#d0d0d0"></div><div class="vs" style="left:808px;height:21px;background:#d0d0d0"></div><div class="vs" style="left:884px;height:21px;background:#d0d0d0"></div><div class="vs" style="left:999px;height:21px;background:#d0d0d0"></div></div><div class="row" style="top:109px;background:#fff"><span style="left:23px">123556743</span><span style="right:1005.5px">2022.05.18 11:46:27</span><span style="right:935.5px">sell limit</span><span style="right:882px">0.20</span><span style="right:815px">eurusd</span><span style="right:737px">1.05468</span><span style="right:661px">1.05708</span><span style="right:586px">1.04968</span><span style="right:510px">1.05096</span><span style="right:245px;color:#808080;font-size:13px;font-weight:bold;top:2px">&#x2715;</span><svg class="abs" style="left:4px;top:2px" width="16" height="17" viewBox="0 0 16 17"><path d="M1.500 1.500H8L11.500 5V14.500H1.500Z" fill="#fff" stroke="#6a6a6a"/><path d="M8 1.500V5H11.500" fill="#e4e4e4" stroke="#6a6a6a"/><circle cx="11" cy="12.500" r="3.600" fill="#dc4416" stroke="#8a2800" stroke-width="0.700"/><circle cx="10" cy="11.400" r="1.300" fill="#ffa888" opacity="0.850"/></svg><div class="vs" style="left:99px;height:21px;background:#d0d0d0"></div><div class="vs" style="left:237px;height:21px;background:#d0d0d0"></div><div class="vs" style="left:307px;height:21px;background:#d0d0d0"></div><div class="vs" style="left:359px;height:21px;background:#d0d0d0"></div><div class="vs" style="left:428px;height:21px;background:#d0d0d0"></div><div class="vs" style="left:504px;height:21px;background:#d0d0d0"></div><div class="vs" style="left:580px;height:21px;background:#d0d0d0"></div><div class="vs" style="left:656px;height:21px;background:#d0d0d0"></div><div class="vs" style="left:732px;height:21px;background:#d0d0d0"></div><div class="vs" style="left:808px;height:21px;background:#d0d0d0"></div><div class="vs" style="left:884px;height:21px;background:#d0d0d0"></div><div class="vs" style="left:999px;height:21px;background:#d0d0d0"></div></div></div><div class="abs" style="left:11px;top:0;width:1px;height:142px;background:#8e8e8e"></div><div class="abs" style="left:1251px;top:1px;width:16px;height:141px;background:#f0f0f0"></div><div class="abs" style="left:1251px;top:66px;width:15px;height:58px;background:#c1c1c1"></div><svg class="abs" style="left:1254px;top:7px" width="10" height="6" viewBox="0 0 10 6" fill="none" stroke="#505050" stroke-width="1.900"><path d="M1.500 5L5 1.500L8.500 5"/></svg><div class="abs" style="left:1251px;top:0;width:17px;height:1px;background:#a0a0a0"></div><svg class="abs" style="left:1254px;top:131px" width="10" height="6" viewBox="0 0 10 6" fill="none" stroke="#505050" stroke-width="1.900"><path d="M1.500 1L5 4.500L8.500 1"/></svg><div class="abs" style="left:11px;top:142px;width:1256px;height:1px;background:#000"></div><div id="ttabs" class="abs" style="left:0;top:142px;width:1270px;height:24px"><div class="abs" style="left:14px;top:0;width:44px;height:22px;background:#fff;border:1px solid #000;border-top:none;border-bottom-width:1.5px"></div><span style="left:24px;color:#000">交易</span><span style="left:68px">展示</span><span style="left:112px">账户历史</span><span style="left:180px">新闻</span><span style="left:224px">警报</span><span style="left:268px">邮箱</span><span style="left:312px">市场</span><span style="left:376px">信号</span><span style="left:420px">文章</span><span style="left:464px">代码库</span><span style="left:520px">EA</span><span style="left:555px">日志</span><span style="left:337.500px;top:7px;font-size:10.500px;font-weight:bold;color:#e03c10">120</span><i style="left:102px"></i><i style="left:170px"></i><i style="left:214px"></i><i style="left:258px"></i><i style="left:302px"></i><i style="left:366px"></i><i style="left:410px"></i><i style="left:454px"></i><i style="left:510px"></i><i style="left:545px"></i><i style="left:590px"></i></div><div class="abs" style="left:-1px;top:142px;width:11px;height:23px;overflow:hidden"><div style="position:absolute;left:-6px;top:5px;width:24px;height:12px;font-size:10px;line-height:12px;color:#222;transform:rotate(-90deg);white-space:nowrap">终端</div></div></div><div id="status" class="abs"><span style="left:-2px">寻求帮助,请按F1键</span><span style="left:462px;font-size:12.6px">Default</span><i style="left:456px"></i><i style="left:591px"></i><i style="left:708px"></i><i style="left:790px"></i><i style="left:871px"></i><i style="left:949px"></i><i style="left:1029px"></i><i style="left:1107px"></i><svg class="abs" style="left:1113px;top:6px" width="23" height="13" viewBox="0 0 23 13"><rect x="0" y="0" width="2" height="9.0" fill="#7a3c00"/><rect x="0" y="10.0" width="2" height="3.0" fill="#001a66"/><rect x="3" y="0" width="2" height="7.9" fill="#7a3c00"/><rect x="3" y="8.9" width="2" height="4.1" fill="#001a66"/><rect x="6" y="0" width="2" height="6.9" fill="#7a3c00"/><rect x="6" y="7.9" width="2" height="5.1" fill="#001a66"/><rect x="9" y="0" width="2" height="5.8" fill="#7a3c00"/><rect x="9" y="6.8" width="2" height="6.2" fill="#001a66"/><rect x="12" y="0" width="2" height="4.7" fill="#7a3c00"/><rect x="12" y="5.7" width="2" height="7.3" fill="#001a66"/><rect x="15" y="0" width="2" height="3.6" fill="#7a3c00"/><rect x="15" y="4.6" width="2" height="8.4" fill="#001a66"/><rect x="18" y="0" width="2" height="2.6" fill="#7a3c00"/><rect x="18" y="3.6" width="2" height="9.4" fill="#001a66"/><rect x="21" y="0" width="2" height="1.5" fill="#7a3c00"/><rect x="21" y="2.5" width="2" height="10.5" fill="#001a66"/></svg><span style="left:1140px;font-size:13px">27516/29 kb</span><svg class="abs" style="left:1256px;top:10px" width="13" height="13" viewBox="0 0 13 13" stroke="#aaa"><path d="M12 1L1 12M12 5L5 12M12 9L9 12"/></svg></div><div class="abs" style="left:1268px;top:395px;width:2px;height:40px;background:#a9c8ef"></div></body></html>
